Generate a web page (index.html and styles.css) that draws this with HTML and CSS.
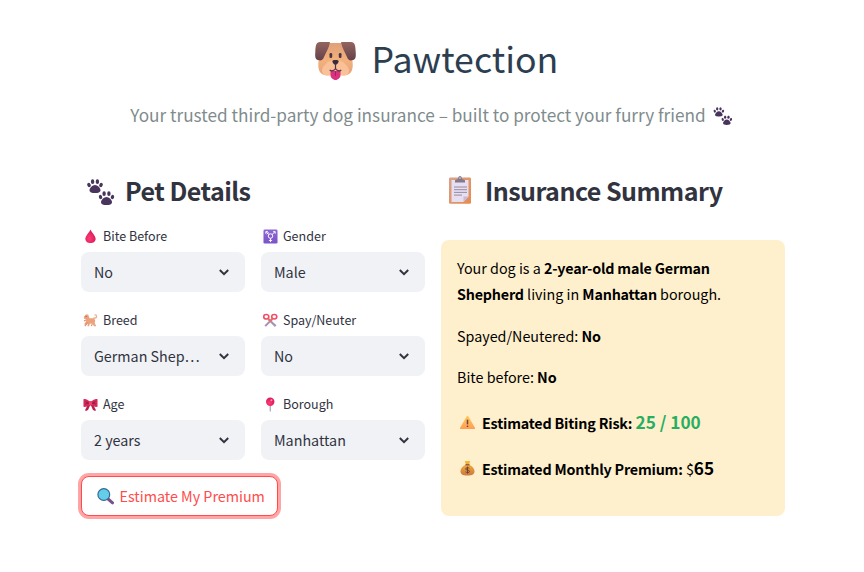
FILE: index.html
```html
<!DOCTYPE html>
<html lang="en">
<head>
<meta charset="utf-8">
<title>Pawtection</title>
<link rel="stylesheet" href="styles.css">
</head>
<body>
<svg class="defs" width="0" height="0" aria-hidden="true">
  <defs>
    <linearGradient id="face" x2="0" y2="1"><stop stop-color="#e0a079"/><stop offset=".55" stop-color="#f3b17c"/><stop offset="1" stop-color="#e8a27d"/></linearGradient>
    <linearGradient id="ear" x2="0" y2="1"><stop stop-color="#93655f"/><stop offset="1" stop-color="#65414a"/></linearGradient>
    <linearGradient id="violet" x2="0" y2="1"><stop stop-color="#8d67d2"/><stop offset="1" stop-color="#7954c8"/></linearGradient>
    <radialGradient id="red" cx=".4" cy=".65"><stop stop-color="#ff3c72"/><stop offset="1" stop-color="#df1f61"/></radialGradient>
    <linearGradient id="amber" x2="0" y2="1"><stop stop-color="#ffca58"/><stop offset="1" stop-color="#ff9d55"/></linearGradient>
    <linearGradient id="bag" x2="0" y2="1"><stop stop-color="#f9bb32"/><stop offset="1" stop-color="#cd793f"/></linearGradient>
    <linearGradient id="board" x2="1" y2="1"><stop stop-color="#d9a18a"/><stop offset="1" stop-color="#e58c4f"/></linearGradient>
    <symbol id="paw" viewBox="0 0 16 14">
      <ellipse cx="2" cy="6" rx="1.7" ry="2.2" transform="rotate(-20 2 6)"/><ellipse cx="5.6" cy="2.7" rx="1.7" ry="2.4"/><ellipse cx="10.4" cy="2.7" rx="1.7" ry="2.4"/><ellipse cx="14" cy="6" rx="1.7" ry="2.2" transform="rotate(20 14 6)"/>
      <path d="M8 6C5.600 6 2.500 9 2.500 11.200 2.500 13.400 5 14 8 14s5.500-.6 5.500-2.800C13.500 9 10.400 6 8 6z"/>
    </symbol>
    <symbol id="paws" viewBox="0 0 28 26"><use href="#paw" width="16" height="14"/><use href="#paw" x="11.500" y="12" width="16" height="14"/></symbol>
    <symbol id="chevron" viewBox="0 0 10 7"><path d="M.8 1 5 5.200 9.200 1" fill="none" stroke="#31333f" stroke-width="2"/></symbol>
  </defs>
</svg>
<main class="page">
  <header class="hero">
    <h1 class="title">
      <svg class="dog" viewBox="0 0 41 38">
        <path d="M8 1h25c3 3 4 11 4.500 18 1 8-1 13-6 14H9.500c-5-1-7-6-6-14C4 12 5 4 8 1z" fill="url(#face)"/>
        <path d="M11 22c3-5 16-5 19 0 4 3 5 7 3 10-3 3-9 2-12.500-2C17 34 11 35 8 32c-2-3-1-7 3-10z" fill="#fac199"/>
        <path d="M5 0h10c-1 6-4 10-6 15-1 3-3 4-6 3-3-.5-3-4-2.700-8C.5 4 1 0 5 0zM36 0H26c1 6 4 10 6 15 1 3 3 4 6 3 3-.5 3-4 2.700-8C40.500 4 40 0 36 0z" fill="url(#ear)"/>
        <rect x="14.500" y="11" width="2.700" height="5" rx="1.300" fill="#493442"/><rect x="23.800" y="11" width="2.700" height="5" rx="1.300" fill="#493442"/>
        <path d="M15.500 29h10v4.500c0 2-2.500 4.500-5 4.500s-5-2.500-5-4.500z" fill="#da327c"/><path d="M20.500 29v5" stroke="#a91f66"/>
        <path d="M17.300 19c0-1.500 6.400-1.500 6.400 0 0 1.800-1.700 3.800-3.200 3.800s-3.200-2-3.200-3.800z" fill="#3b2c3c"/>
        <path d="M20.500 22v4.500c-1 2.300-4 3-5.800 1.500m5.800-1.500c1 2.300 4 3 5.800 1.500" stroke="#523342" stroke-width="1.200" fill="none"/>
      </svg>
      <span>Pawtection</span>
    </h1>
    <p class="tagline"><span>Your trusted third-party dog insurance – built to protect your furry friend</span><svg class="paws-small"><use href="#paws"/></svg></p>
  </header>
  <div class="columns">
    <section class="details">
      <h2 class="heading"><svg class="paws-large"><use href="#paws"/></svg><span>Pet Details</span></h2>
      <div class="fields">
        <div class="field">
          <div class="label"><svg class="icon" viewBox="0 0 16 16"><path d="M8 .5c1 3 5.500 6.500 5.500 10 0 3-2.500 4.500-5.500 4.500s-5.500-1.500-5.500-4.500C2.500 7 7 3.500 8 .5z" fill="url(#red)"/></svg><span>Bite Before</span></div>
          <div class="select"><span>No</span><svg class="chevron"><use href="#chevron"/></svg></div>
        </div>
        <div class="field">
          <div class="label"><svg class="icon" viewBox="0 0 16 16"><rect x=".5" y=".5" width="15" height="15" rx="1.500" fill="url(#violet)"/><g fill="none" stroke="#fff" stroke-width="1"><circle cx="8" cy="7.500" r="2.400"/><path d="M6.300 5.800 3.200 2.900M3 5V2.800h2.200M4 5.500l2-1.800M9.700 5.800l3.100-2.900M10.800 2.800H13V5M8 10v4M6.300 12.200h3.400"/></g></svg><span>Gender</span></div>
          <div class="select"><span>Male</span><svg class="chevron"><use href="#chevron"/></svg></div>
        </div>
        <div class="field">
          <div class="label"><svg class="icon" viewBox="0 0 16 16"><path d="M11 5.500c3.500 0 4-1 3.300-2.700-.4-1-1.500-.8-2-.4" fill="none" stroke="#eeb28b" stroke-width="1.400"/><path d="M1 4 3 1.700h2.500L7 5.500h5l1 2.700-.6 2.400 1.800 3.400h-2.500l-1.500-2.700-3 .1-.7 2.600H4.800l.4-3-2 1.500L1 12l2-2.500V6.400L1 6z" fill="#eba27d"/><path d="M3 7.500 1 8.500M10 11l-1 3M5 10l-3 4" stroke="#e18c6c" stroke-width="1.200"/><circle cx="3.300" cy="3.700" r=".6" fill="#704650"/></svg><span>Breed</span></div>
          <div class="select"><span>German Shep…</span><svg class="chevron"><use href="#chevron"/></svg></div>
        </div>
        <div class="field">
          <div class="label"><svg class="icon" viewBox="0 0 16 16"><path d="m5.500 6.500 8 7.500M10 6.500 2.300 14" stroke="#a890b5" stroke-width="2.200"/><ellipse cx="3.500" cy="4" rx="2.700" ry="2.400" fill="none" stroke="#f44c68" stroke-width="1.700"/><ellipse cx="12" cy="4" rx="2.700" ry="2.400" fill="none" stroke="#f44c68" stroke-width="1.700"/><path d="m5.500 5.800 2.300 2.500 2.300-2.500" fill="none" stroke="#f36b57" stroke-width="1.700"/></svg><span>Spay/Neuter</span></div>
          <div class="select"><span>No</span><svg class="chevron"><use href="#chevron"/></svg></div>
        </div>
        <div class="field">
          <div class="label"><svg class="icon" viewBox="0 0 16 16"><path d="M5.500 7.500 2 14.500l2 .2 1.500-1L7.500 9h1l2 4.700 1.500 1 2-.2-3.500-7z" fill="#b81f51"/><path d="M.5 2.500c2-1 4.500.5 6.500 2h2c2-1.500 4.500-3 6.500-2v8c-2.500.5-4.500-.5-6.500-2H7c-2 1.500-4 2.500-6.500 2z" fill="#d42959"/><path d="m2.500 5 4 1.500-4 1m11-2.500-4 1.500 4 1" stroke="#9a1747" fill="none"/><rect x="6.300" y="4.500" width="3.400" height="4.200" rx="1" fill="#f03f68"/></svg><span>Age</span></div>
          <div class="select"><span>2 years</span><svg class="chevron"><use href="#chevron"/></svg></div>
        </div>
        <div class="field">
          <div class="label"><svg class="icon" viewBox="0 0 16 16"><path d="M7.700 8v7.500" stroke="#9b93a5" stroke-width="1.100"/><circle cx="7.700" cy="5" r="4.500" fill="url(#red)"/><circle cx="9" cy="3.500" r="1" fill="#ff9db9"/></svg><span>Borough</span></div>
          <div class="select"><span>Manhattan</span><svg class="chevron"><use href="#chevron"/></svg></div>
        </div>
      </div>
      <button class="estimate"><svg class="lens" viewBox="0 0 17 17"><path d="m10 10 5.500 4.800" stroke="#78518a" stroke-width="3" stroke-linecap="round"/><circle cx="6.800" cy="6.500" r="5.900" fill="#64cee9" stroke="#376996" stroke-width="1.200"/></svg><span>Estimate My Premium</span></button>
    </section>
    <section class="summary">
      <h2 class="heading"><svg class="clipboard" viewBox="0 0 22 28"><rect y="1.500" width="22" height="26.300" rx="1.200" fill="url(#board)"/><path d="M2.500 4h17v16.500L14.500 26h-12z" fill="#e7def0"/><path d="M14.500 26v-5.500h5z" fill="#c9b8db"/><path d="M5 11h13M5 13.700h13M5 16.400h13M5 19.100h8" stroke="#8c819b" stroke-width=".9"/><path d="M6 6.500V4.300l3-1.300C9 1 10 0 11 0s2 1 2 3l3 1.300v2.200z" fill="#82798b"/><circle cx="11" cy="2" r=".8" fill="#e5ddeb"/></svg><span>Insurance Summary</span></h2>
      <div class="card">
        <p>Your dog is a <strong>2-year-old male German</strong><br><strong>Shepherd</strong> living in <strong>Manhattan</strong> borough.</p>
        <p>Spayed/Neutered: <strong>No</strong></p>
        <p class="bite">Bite before: <strong>No</strong></p>
        <p class="result"><svg class="icon" viewBox="0 0 16 16"><path d="M7 1.600q1-1.600 2 0L15.900 13.500q.7 1.500-1 1.500H1.100q-1.700 0-1-1.500z" fill="url(#amber)"/><path d="M8 5v5" stroke="#654550" stroke-width="1.600"/><circle cx="8" cy="12" r=".9" fill="#654550"/></svg><span><strong>Estimated Biting Risk:</strong> <strong class="risk">25 / 100</strong></span></p>
        <p class="result"><svg class="icon" viewBox="0 0 16 16"><path d="M5 0h6L9.600 4c3 1 5.900 4 5.900 7 0 3-2 4.500-7.500 4.500S.5 14 .5 11c0-3 2.900-6 5.900-7z" fill="url(#bag)"/><path d="M5.800 4h4.400" stroke="#8d5045" stroke-width="1.300"/><path d="M10 7.800c-1-1-4-.8-4 .7 0 1.700 4.200.7 4.200 2.500 0 1.600-3 1.700-4.300.6M8 6v7.500" fill="none" stroke="#6b4039"/></svg><span><strong>Estimated Monthly Premium:</strong> $<strong class="price">65</strong></span></p>
      </div>
    </section>
  </div>
</main>
</body>
</html>
```
FILE: styles.css
```css
* { box-sizing: border-box; }
body {
  margin: 0;
  background: #fff;
  color: #31333f;
  font: 14.32px/26px "Noto Sans CJK JP", "Noto Sans", sans-serif;
}
h1, h2, p { margin: 0; }
svg { flex: none; display: block; }
span, strong { white-space: nowrap; }
.defs { position: absolute; }
.page { width: 704px; height: 572px; margin-left: 81px; padding-top: 29px; }
.hero { height: 135px; }
.title {
  display: flex;
  justify-content: center;
  align-items: center;
  gap: 16px;
  height: 58px;
  padding-left: 7px;
  color: #2c3e50;
  font-size: 35.7px;
  font-weight: 400;
  line-height: 58px;
}
.dog { width: 41px; height: 38px; margin-top: 6px; }
.tagline {
  display: flex;
  justify-content: center;
  align-items: center;
  gap: 7px;
  margin: 13px 3px 0 0;
  color: #7f8c8d;
  font-size: 17.2px;
  line-height: 30px;
}
.paws-small { width: 20px; height: 18px; margin-top: 2px; fill: #48345d; }
.paws-large { width: 28px; height: 26px; margin: 3px 10.500px 0 5.500px; fill: #48345d; }
.columns { display: grid; grid-template-columns: 344px 344px; gap: 16px; }
.heading {
  display: flex;
  align-items: center;
  height: 52px;
  font-size: 25.06px;
  font-weight: 600;
  letter-spacing: -.54px;
  line-height: 52px;
}
.clipboard { width: 22px; height: 28px; margin: 0 14px 0 8px; }
.fields { display: grid; grid-template-columns: 164px 164px; gap: 16px; margin-top: 8px; }
.field { height: 68px; padding-top: 1px; }
.label {
  display: flex;
  align-items: center;
  gap: 5px;
  height: 22px;
  margin-bottom: 5px;
  padding-left: 2px;
  font-size: 12.53px;
  line-height: 22px;
}
.icon { width: 15px; height: 15px; }
.select {
  display: flex;
  align-items: center;
  justify-content: space-between;
  height: 40px;
  padding: 0 16px 0 13px;
  border-radius: 8px;
  background: #f0f2f6;
}
.chevron { width: 10px; height: 7px; }
.estimate {
  display: flex;
  align-items: center;
  gap: 6px;
  width: 197px;
  height: 40px;
  margin-top: 16px;
  padding: 0 0 0 14.500px;
  border: 1px solid #ff4b4b;
  border-radius: 8px;
  background: #fff;
  box-shadow: 0 0 0 3px rgba(255, 75, 75, .5);
  color: #ff4b4b;
  font: inherit;
}
.lens { width: 17px; height: 17px; }
.card {
  height: 276px;
  margin-top: 24px;
  padding: 15px 16px;
  border-radius: 8px;
  background: #fff0cd;
  color: #000;
}
.card p + p { margin-top: 16px; }
.card p.bite { margin: 15px 0 17px; }
.card strong { font-weight: 600; letter-spacing: -.19px; }
.result { display: flex; align-items: center; gap: 7px; height: 30px; padding-left: 3px; }
.card .risk { color: #27ae60; font-size: 17.2px; font-weight: 700; letter-spacing: 0; }
.card .price { font-size: 17.2px; font-weight: 700; letter-spacing: 0; }
```
